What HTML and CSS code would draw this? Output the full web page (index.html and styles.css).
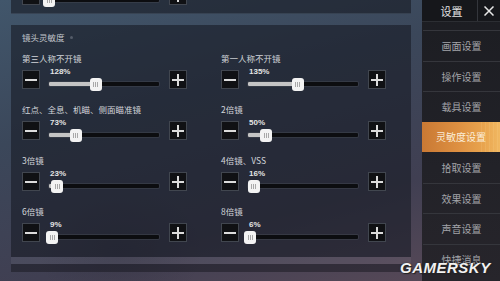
FILE: index.html
```html
<!DOCTYPE html>
<html lang="zh-CN">
<head>
<meta charset="utf-8">
<title>设置</title>
<link rel="stylesheet" href="styles.css">
</head>
<body>
<div class="app">
  <main class="main">
    <div class="top-panel">
      <div class="top-row">
        <div class="ctrl">
          <button class="btn"><svg viewBox="0 0 12 12" width="12" height="12"><path d="M0 6H12" stroke="#dcdcdc" stroke-width="2"/></svg></button>
          <div class="slider">
            <div class="pct">&nbsp;</div>
            <div class="track"><div class="fill" style="width:0%"></div><div class="thumb" style="left:0%"><span></span></div></div>
          </div>
          <button class="btn"><svg viewBox="0 0 12 12" width="12" height="12"><path d="M0 6H12M6 0V12" stroke="#dcdcdc" stroke-width="2"/></svg></button>
        </div>
      </div>
    </div>

    <section class="panel">
      <h2 class="heading">镜头灵敏度<span class="dot"></span></h2>
      <div class="grid">
        <div class="cell">
          <div class="label">第三人称不开镜</div>
          <div class="ctrl">
            <button class="btn"><svg viewBox="0 0 12 12" width="12" height="12"><path d="M0 6H12" stroke="#dcdcdc" stroke-width="2"/></svg></button>
            <div class="slider">
              <div class="pct">128%</div>
              <div class="track"><div class="fill" style="width:42.7%"></div><div class="thumb" style="left:42.7%"><span></span></div></div>
            </div>
            <button class="btn"><svg viewBox="0 0 12 12" width="12" height="12"><path d="M0 6H12M6 0V12" stroke="#dcdcdc" stroke-width="2"/></svg></button>
          </div>
        </div>
        <div class="cell">
          <div class="label">第一人称不开镜</div>
          <div class="ctrl">
            <button class="btn"><svg viewBox="0 0 12 12" width="12" height="12"><path d="M0 6H12" stroke="#dcdcdc" stroke-width="2"/></svg></button>
            <div class="slider">
              <div class="pct">135%</div>
              <div class="track"><div class="fill" style="width:45%"></div><div class="thumb" style="left:45%"><span></span></div></div>
            </div>
            <button class="btn"><svg viewBox="0 0 12 12" width="12" height="12"><path d="M0 6H12M6 0V12" stroke="#dcdcdc" stroke-width="2"/></svg></button>
          </div>
        </div>
        <div class="cell">
          <div class="label">红点、全息、机瞄、侧面瞄准镜</div>
          <div class="ctrl">
            <button class="btn"><svg viewBox="0 0 12 12" width="12" height="12"><path d="M0 6H12" stroke="#dcdcdc" stroke-width="2"/></svg></button>
            <div class="slider">
              <div class="pct">73%</div>
              <div class="track"><div class="fill" style="width:24.3%"></div><div class="thumb" style="left:24.3%"><span></span></div></div>
            </div>
            <button class="btn"><svg viewBox="0 0 12 12" width="12" height="12"><path d="M0 6H12M6 0V12" stroke="#dcdcdc" stroke-width="2"/></svg></button>
          </div>
        </div>
        <div class="cell">
          <div class="label">2倍镜</div>
          <div class="ctrl">
            <button class="btn"><svg viewBox="0 0 12 12" width="12" height="12"><path d="M0 6H12" stroke="#dcdcdc" stroke-width="2"/></svg></button>
            <div class="slider">
              <div class="pct">50%</div>
              <div class="track"><div class="fill" style="width:16.7%"></div><div class="thumb" style="left:16.7%"><span></span></div></div>
            </div>
            <button class="btn"><svg viewBox="0 0 12 12" width="12" height="12"><path d="M0 6H12M6 0V12" stroke="#dcdcdc" stroke-width="2"/></svg></button>
          </div>
        </div>
        <div class="cell">
          <div class="label">3倍镜</div>
          <div class="ctrl">
            <button class="btn"><svg viewBox="0 0 12 12" width="12" height="12"><path d="M0 6H12" stroke="#dcdcdc" stroke-width="2"/></svg></button>
            <div class="slider">
              <div class="pct">23%</div>
              <div class="track"><div class="fill" style="width:7.7%"></div><div class="thumb" style="left:7.7%"><span></span></div></div>
            </div>
            <button class="btn"><svg viewBox="0 0 12 12" width="12" height="12"><path d="M0 6H12M6 0V12" stroke="#dcdcdc" stroke-width="2"/></svg></button>
          </div>
        </div>
        <div class="cell">
          <div class="label">4倍镜、VSS</div>
          <div class="ctrl">
            <button class="btn"><svg viewBox="0 0 12 12" width="12" height="12"><path d="M0 6H12" stroke="#dcdcdc" stroke-width="2"/></svg></button>
            <div class="slider">
              <div class="pct">16%</div>
              <div class="track"><div class="fill" style="width:5.3%"></div><div class="thumb" style="left:5.3%"><span></span></div></div>
            </div>
            <button class="btn"><svg viewBox="0 0 12 12" width="12" height="12"><path d="M0 6H12M6 0V12" stroke="#dcdcdc" stroke-width="2"/></svg></button>
          </div>
        </div>
        <div class="cell">
          <div class="label">6倍镜</div>
          <div class="ctrl">
            <button class="btn"><svg viewBox="0 0 12 12" width="12" height="12"><path d="M0 6H12" stroke="#dcdcdc" stroke-width="2"/></svg></button>
            <div class="slider">
              <div class="pct">9%</div>
              <div class="track"><div class="fill" style="width:3%"></div><div class="thumb" style="left:3%"><span></span></div></div>
            </div>
            <button class="btn"><svg viewBox="0 0 12 12" width="12" height="12"><path d="M0 6H12M6 0V12" stroke="#dcdcdc" stroke-width="2"/></svg></button>
          </div>
        </div>
        <div class="cell">
          <div class="label">8倍镜</div>
          <div class="ctrl">
            <button class="btn"><svg viewBox="0 0 12 12" width="12" height="12"><path d="M0 6H12" stroke="#dcdcdc" stroke-width="2"/></svg></button>
            <div class="slider">
              <div class="pct">6%</div>
              <div class="track"><div class="fill" style="width:2%"></div><div class="thumb" style="left:2%"><span></span></div></div>
            </div>
            <button class="btn"><svg viewBox="0 0 12 12" width="12" height="12"><path d="M0 6H12M6 0V12" stroke="#dcdcdc" stroke-width="2"/></svg></button>
          </div>
        </div>
      </div>
    </section>

    <div class="band-light"></div>
    <div class="band-dark"></div>
  </main>

  <nav class="sidebar">
    <div class="side-head">
      <div class="side-title">设置</div>
      <div class="side-close"><svg viewBox="0 0 10 10" width="10" height="10"><path d="M0.5 0.5L9.5 9.5M9.5 0.5L0.5 9.5" stroke="#e8e8e8" stroke-width="1.5"/></svg></div>
    </div>
    <ul class="menu">
      <li class="item">画面设置</li>
      <li class="item">操作设置</li>
      <li class="item">载具设置</li>
      <li class="item active">灵敏度设置</li>
      <li class="item">拾取设置</li>
      <li class="item">效果设置</li>
      <li class="item">声音设置</li>
      <li class="item">快捷消息</li>
    </ul>
  </nav>
</div>
<div class="watermark">GAMERSKY</div>
</body>
</html>
```

FILE: styles.css
```css
html, body {
  margin: 0;
  padding: 0;
  width: 500px;
  height: 281px;
  overflow: hidden;
}

body {
  position: relative;
  font-family: "Noto Sans CJK SC", "Noto Sans", sans-serif;
  background:
    radial-gradient(ellipse 120px 90px at 120px 250px, rgba(30, 30, 40, 0.18), transparent 70%),
    linear-gradient(165deg, #41566b 0%, #3b475a 35%, #403f52 70%, #5a4a58 100%);
}

.app {
  display: flex;
  width: 500px;
  height: 281px;
}

.main {
  width: 422px;
  box-sizing: border-box;
  padding: 0 11px;
  display: flex;
  flex-direction: column;
}

.top-panel {
  height: 14px;
  overflow: hidden;
  background: rgba(24, 27, 37, 0.62);
  border-bottom: 1px solid rgba(90, 105, 125, 0.35);
  box-sizing: border-box;
}

.top-row {
  margin-top: -14px;
  padding-left: 11px;
  width: 165px;
}

.panel {
  margin-top: 11px;
  height: 232px;
  box-sizing: border-box;
  padding: 6px 25px 0 11px;
  background: rgba(24, 27, 37, 0.6);
}

.heading {
  margin: 0;
  font-size: 8.5px;
  line-height: 12px;
  height: 12px;
  font-weight: normal;
  color: #c2c6cd;
  display: flex;
  align-items: center;
}

.dot {
  width: 3px;
  height: 3px;
  border-radius: 50%;
  background: #545c69;
  margin-left: 5px;
}

.grid {
  margin-top: 9px;
  display: grid;
  grid-template-columns: 165px 165px;
  column-gap: 34px;
  row-gap: 14px;
}

.label {
  font-size: 8.5px;
  line-height: 12px;
  height: 12px;
  color: #d2d5da;
  white-space: nowrap;
}

.ctrl {
  margin-top: 6px;
  height: 19px;
  display: flex;
  align-items: flex-start;
}

.top-row .ctrl {
  margin-top: 0;
}

.btn {
  width: 18px;
  height: 19px;
  flex: none;
  padding: 0;
  margin: 0;
  box-sizing: border-box;
  background: #101114;
  border: 1px solid #41464f;
  display: flex;
  align-items: center;
  justify-content: center;
}

.btn svg {
  display: block;
}

.slider {
  width: 110px;
  margin: 0 10px 0 9px;
  flex: none;
  display: flex;
  flex-direction: column;
}

.pct {
  margin-top: -3px;
  height: 10px;
  line-height: 10px;
  font-family: "Liberation Sans", Arial, sans-serif;
  font-weight: bold;
  font-size: 8px;
  color: #e4e4e4;
  padding-left: 1px;
}

.track {
  position: relative;
  margin-top: 5px;
  height: 4px;
  background: #0c0d10;
  box-shadow: 0 0 0 1px rgba(70, 75, 85, 0.45);
  border-radius: 1px;
}

.fill {
  height: 4px;
  background: #c4c4c4;
  border-radius: 1px 0 0 1px;
}

.thumb {
  position: absolute;
  top: -4.5px;
  width: 12px;
  height: 13px;
  margin-left: -6px;
  box-sizing: border-box;
  background: #f3f3f3;
  border-radius: 3px;
  display: flex;
  align-items: center;
  justify-content: center;
}

.thumb span {
  width: 5px;
  height: 5px;
  background: repeating-linear-gradient(90deg, #a8a8a8 0 1px, transparent 1px 2px);
}

.band-light {
  height: 7px;
  background: rgba(255, 255, 255, 0.06);
}

.band-dark {
  height: 8px;
  background: rgba(22, 22, 30, 0.5);
}

.sidebar {
  width: 78px;
  flex: none;
  background: linear-gradient(180deg, #1c1d22 0%, #222228 60%, #27252b 100%);
  display: flex;
  flex-direction: column;
}

.side-head {
  height: 22px;
  display: flex;
  background: #16171b;
  border-bottom: 1px solid #2c2e33;
  box-sizing: border-box;
}

.side-title {
  flex: 1;
  display: flex;
  align-items: center;
  justify-content: center;
  font-size: 11px;
  color: #e2e2e2;
  padding-left: 4px;
}

.side-close {
  width: 22px;
  border-left: 1px solid #34363c;
  display: flex;
  align-items: center;
  justify-content: center;
}

.menu {
  list-style: none;
  margin: 0;
  padding: 8px 0 0 0;
}

.item {
  height: 30.5px;
  box-sizing: border-box;
  border-top: 1px solid #35363c;
  display: flex;
  align-items: center;
  justify-content: center;
  font-size: 10px;
  color: #a3a4a9;
  margin-left: 1px;
}

.item.active {
  margin-left: 0;
  border-top: none;
  color: #fbeeda;
  background:
    repeating-linear-gradient(90deg, transparent 0 3px, rgba(255, 230, 170, 0.12) 3px 4px) right / 22px 100% no-repeat,
    linear-gradient(90deg, #c97934 0%, #dd8f41 45%, #e9a54f 80%, #f1b862 100%);
}

.item.active + .item {
  border-top: none;
}

.watermark {
  position: absolute;
  left: 400px;
  top: 260px;
  font-family: "Liberation Sans", Arial, sans-serif;
  font-weight: bold;
  font-style: italic;
  font-size: 15px;
  line-height: 15px;
  letter-spacing: 0.5px;
  color: #f2f2f2;
  text-shadow: 1px 1px 1px #222, 0 0 2px #333;
}
```
